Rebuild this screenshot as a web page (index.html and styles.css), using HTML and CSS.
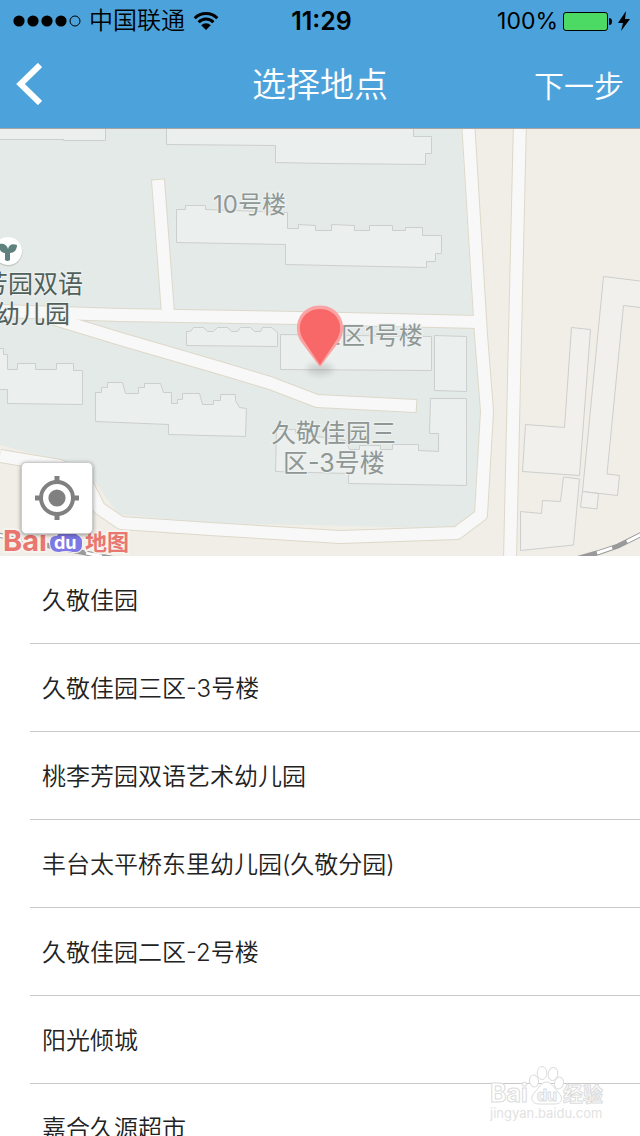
FILE: index.html
```html
<!DOCTYPE html>
<html lang="zh-CN">
<head>
<meta charset="utf-8">
<meta name="viewport" content="width=device-width, initial-scale=1">
<title>选择地点</title>
<link rel="stylesheet" href="styles.css">
</head>
<body>
<div class="screen">
  <header class="top">
    <div class="status">
      <div class="status-left">
        <svg class="signal" viewBox="0 0 68 12" width="68" height="12" aria-hidden="true">
          <circle cx="6" cy="6" r="5.6"/><circle cx="20" cy="6" r="5.6"/><circle cx="34" cy="6" r="5.6"/><circle cx="48" cy="6" r="5.6"/>
          <circle cx="62" cy="6" r="5" fill="none" stroke="#000" stroke-width="1"/>
        </svg>
        <span class="carrier">中国联通</span>
        <svg viewBox="0 0 26 20" width="26" height="20" aria-hidden="true">
          <path d="M1.7 7.2A16 16 0 0 1 24.3 7.2M5.6 11.2A10.4 10.4 0 0 1 20.4 11.2" fill="none" stroke="#000" stroke-width="3"/>
          <path d="M8.2 14.2A7 7 0 0 1 17.8 14.2L13 19Z"/>
        </svg>
      </div>
      <span class="clock">11:29</span>
      <div class="status-right">
        <span class="percent">100%</span>
        <svg viewBox="0 0 68 20" width="68" height="20" aria-hidden="true">
          <rect x="1.5" y="1.5" width="44" height="18" rx="2.5" fill="#4cd964" stroke="#000"/>
          <path d="M47 7q3 0 3 3.5t-3 3.5Z"/>
          <path d="M64 0L56 12h5l-2 8 9-12h-5Z"/>
        </svg>
      </div>
    </div>
    <nav class="nav">
      <button class="back" type="button" aria-label="返回">
        <svg viewBox="0 0 26 42" width="26" height="42" aria-hidden="true"><path d="M24 2L4.500 21L24 40" fill="none" stroke="#fff" stroke-width="6"/></svg>
      </button>
      <h1 class="title">选择地点</h1>
      <button class="next" type="button">下一步</button>
    </nav>
  </header>

  <section class="map" aria-label="地图">
    <svg class="map-canvas" viewBox="0 129 640 427" preserveAspectRatio="xMidYMid slice">
      <rect y="128" width="640" height="428" fill="#f1eee7"/>
      <path class="estate" d="M0 128H461L473 320L481 410L474 512L454 529L350 526L210 523L118 514L95 482L70 463L0 445Z"/>
      <g class="roads-casing">
        <path d="M0 456L60 466L85 480L99 508L121 523L210 529L340 537L457 533L481 515L487 411L481 335L468 120"/>
        <path d="M0 311L120 315L300 318L479 322"/>
        <path d="M45 316L124 340L210 365L270 383L317 401L417 406"/>
        <path d="M158 179L168 314"/>
        <path d="M520 120L515 335L510 560"/>
      </g>
      <g class="roads">
        <path d="M0 456L60 466L85 480L99 508L121 523L210 529L340 537L457 533L481 515L487 411L481 335L468 120"/>
        <path d="M0 311L120 315L300 318L479 322"/>
        <path d="M45 316L124 340L210 365L270 383L317 401L416 406"/>
        <path d="M158 180L168 314"/>
        <path d="M520 120L515 335L510 560"/>
      </g>
      <g class="buildings">
        <path d="M-2 120H105.500V140.500H63.500V139.500H-2Z"/>
        <path d="M166.500 120V144.500L275.500 145.500V162.500L326.500 163.500L425.500 164.500V153.500H431.500V136.500H413.500V120Z"/>
        <path d="M176.500 242.500V209.500H185.500V205.500H205.500V209.500L287.500 212.500V228.500H298.500V224.500L315.500 225.500V230.500H331.500V224.500L354.500 225.500V230.500H369.500V225.500H392.500V230.500H405.500V227.500H422.500V235.500H441.500V253.500H435.500V261.500H426.500V267.500L285.500 264.500V244.500Z"/>
        <path d="M186.500 345.500V331.500H190.500L193.500 327.500H203.500L207.500 331.500H213.500L217.500 327.500H227.500L231.500 331.500H237.500L240.500 327.500H250.500L254.500 331.500H260.500L262.500 327.500H271.500L277.500 332.500V346.500Z"/>
        <path d="M280.500 334.500L431.500 336.500V370.500L280.500 369.500Z"/>
        <path d="M434.500 335.500L466.500 336.500V391.500L434.500 390.500Z"/>
        <path d="M430.500 398.500H466.500V485.500L348.500 483.500V473.500L275.500 471.500L276.500 429.500H295.500V433.500L345.500 440.500L349.500 449.500H359.500V445.500H380.500V449.500H392.500V444.500H418.500V450.500L438.500 451.500V433.500H429.500Z"/>
        <path d="M-2 348.500H3.500V354.500H7.500V369.500H17.500V363.500H35.500V369.500H56.500V363.500H73.500V370.500H82.500V404.500L7.500 403.500V389.500H-2Z"/>
        <path d="M95.500 421.500V392.500H101.500V387.500H107.500V382.500H122.500L125.500 393.500H138.500V387.500H144.500V383.500H160.500L163.500 392.500H171.500V403.500H177.500V399.500H182.500V393.500H199.500L202.500 404.500H213.500V400.500H220.500V394.500H235.500V400.500L239.500 407.500L246.500 408.500L245.500 436.500L168.500 434.500V424.500Z"/>
      </g>
      <g class="buildings plain">
        <path d="M571.500 327.500L590.500 329.500L579.500 475.500L522.500 471.500L525.500 424.500L564.500 427.500Z"/>
        <path d="M603.500 276.500L644 281.500V308L623.500 305.500L607 474L619.500 475.500L617.500 495.500L582.500 491.500Z"/>
        <path d="M582.500 491.500L598.500 493.500L597 509L580.500 507Z"/>
        <path d="M563.500 477L579.500 479L573.500 545L520.500 550.500V511.500L541.500 513.500L542.500 500.500L560.500 501.500Z"/>
      </g>
      <g fill="none">
        <path d="M572 560L597 553L618 546L644 533M-2 535L50 546L116 559" stroke="#999" stroke-width="5"/>
        <path d="M572 560L597 553L618 546L644 533M-2 535L50 546L116 559" stroke="#fff" stroke-width="3" stroke-dasharray="16 16" stroke-dashoffset="6"/>
      </g>
      <circle cx="8" cy="252" r="14.500" fill="#c5cbc9"/>
      <circle cx="8" cy="251" r="14" fill="#fff"/>
      <path d="M-1 244C4 243 7 245 8 249C9 245 12 243 17 245C17 250 14 253 10 253V260Q7.500 262 5 260V253C1 253-1 250-1 244Z" fill="#5f817e"/>
      <g class="labels">
        <text x="213" y="213">10号楼</text>
        <text x="317" y="344">三区1号楼</text>
        <g class="labels-large">
          <text x="271" y="442">久敬佳园三</text>
          <text x="283" y="472">区-3号楼</text>
        </g>
        <g class="labels-poi">
          <text x="-17" y="293">芳园双语</text>
          <text x="-5" y="323">幼儿园</text>
        </g>
      </g>
      <ellipse class="pin-shadow" cx="320" cy="369" rx="13" ry="6"/>
      <path d="M320 367L300.500 341C291 325 301 305.500 320 305.500S349 325 339.500 341Z" fill="#faa3a2"/>
      <path d="M320 365L303.500 340C294 325 304 309 320 309S346 325 336.500 340Z" fill="#f96868"/>
      <g class="brand">
        <g class="brand-halo">
          <text x="3" y="551" class="brand-latin">Bai</text>
          <text x="85" y="550" class="brand-han">地图</text>
        </g>
        <path d="M50 543Q50 535 57 536Q59 531 66 531Q74 530 77 535Q83 537 82 545Q82 553 73 552Q66 550 59 552Q50 552 50 543Z" fill="#7d78e5" stroke="#f5f3ef" stroke-width="2" paint-order="stroke"/>
        <text x="54" y="549" class="brand-du">du</text>
      </g>
    </svg>
    <button class="locate" type="button" aria-label="定位">
      <svg viewBox="0 0 44 44" width="44" height="44" aria-hidden="true">
        <circle cx="22" cy="22" r="16" fill="none" stroke="#808080" stroke-width="4"/>
        <circle cx="22" cy="22" r="8.600" fill="#808080"/>
        <path d="M22 0V6M22 38V44M0 22H6M38 22H44" stroke="#808080" stroke-width="5"/>
      </svg>
    </button>
  </section>

  <ul class="places">
    <li><button type="button">久敬佳园</button></li>
    <li><button type="button">久敬佳园三区-3号楼</button></li>
    <li><button type="button">桃李芳园双语艺术幼儿园</button></li>
    <li><button type="button">丰台太平桥东里幼儿园(久敬分园)</button></li>
    <li><button type="button">久敬佳园二区-2号楼</button></li>
    <li><button type="button">阳光倾城</button></li>
    <li><button type="button">嘉合久源超市</button></li>
  </ul>

  <svg class="watermark" viewBox="0 0 120 60" width="120" height="60">
    <g fill="#fff" stroke="#dcdcdc">
      <ellipse cx="44" cy="17" rx="4.500" ry="6" transform="rotate(-12 44 17)"/>
      <ellipse cx="52" cy="9" rx="4.800" ry="6.500"/>
      <ellipse cx="63" cy="10" rx="4.800" ry="6.500" transform="rotate(10 63 10)"/>
      <ellipse cx="69" cy="19" rx="4.500" ry="6" transform="rotate(14 69 19)"/>
      <path d="M56 18C51 18 49 24 45 28C39 34 42 40 49 40H65C72 40 74 34 68 28C64 24 62 18 56 18Z"/>
      <text x="0" y="38" class="mark-latin">Bai</text>
      <text x="47" y="37" class="mark-du">du</text>
      <text x="73" y="38" class="mark-han">经验</text>
      <text x="0" y="54" class="mark-url">jingyan.baidu.com</text>
    </g>
  </svg>
</div>
</body>
</html>
```
FILE: styles.css
```css
* {
  box-sizing: border-box;
}

body {
  margin: 0;
  background: #fff;
  color: #222;
  font-family: Inter, "Noto Sans CJK SC", sans-serif;
  font-size: 24px;
}

button {
  margin: 0;
  padding: 0;
  border: 0;
  background: none;
  color: inherit;
  font: inherit;
  cursor: pointer;
}

svg {
  display: block;
}

.screen {
  position: relative;
  display: flex;
  flex-direction: column;
  height: 100vh;
  overflow: hidden;
}

.top {
  flex: none;
  background: #4ca3db;
}

.status {
  display: grid;
  grid-template-columns: 1fr auto 1fr;
  align-items: center;
  height: 40px;
  padding: 0 10px 0 13px;
  color: #000;
  line-height: 40px;
}

.status-left,
.status-right {
  display: flex;
  align-items: center;
}

.status > * {
  padding-top: 1px;
}

.status-left {
  gap: 8px;
}

.status-right {
  justify-content: flex-end;
  gap: 4px;
}

.carrier {
  font-weight: 350;
}

.percent {
  font-size: 23px;
}

.clock {
  font-size: 25px;
  font-weight: 600;
}

.nav {
  display: grid;
  grid-template-columns: 1fr auto 1fr;
  align-items: center;
  height: 88px;
  padding: 0 16px;
  color: #fff;
}

.back {
  justify-self: start;
}

.title {
  margin: 0;
  padding-top: 2px;
  font-size: 34px;
  font-weight: 350;
  line-height: 48px;
}

.next {
  justify-self: end;
  font-size: 30px;
  font-weight: 350;
}

.map {
  position: relative;
  flex: none;
  height: 428px;
  border-top: 1px solid #a5a5a5;
}

.map-canvas {
  width: 100%;
  height: 100%;
}

.estate {
  fill: #e4eae8;
}

.roads-casing,
.roads {
  fill: none;
  stroke-linejoin: round;
}

.roads-casing {
  stroke: #ddd8c9;
  stroke-width: 14px;
}

.roads {
  stroke: #f8f8f8;
  stroke-width: 12px;
}

.buildings {
  fill: #ebefee;
  stroke: #cdcfce;
}

.plain {
  fill: #f1f0ec;
}

.labels {
  fill: #8e9794;
  stroke: #eef2f1;
  stroke-width: 2px;
  paint-order: stroke;
  font-size: 24px;
}

.labels-large {
  font-size: 25px;
}

.labels-poi {
  fill: #50605b;
  font-size: 25px;
}

.pin-shadow {
  fill: #000;
  opacity: 0.12;
  filter: blur(3px);
}

.brand-halo {
  fill: #ea7670;
  stroke: #f5f3ef;
  stroke-width: 4px;
  paint-order: stroke;
}

.brand-latin {
  font-size: 29px;
  font-weight: 700;
}

.brand-han {
  font-size: 22px;
  font-weight: 700;
}

.brand-du {
  fill: #fff;
  font-size: 18px;
  font-weight: 700;
}

.locate {
  position: absolute;
  bottom: 22px;
  left: 21px;
  display: grid;
  place-items: center;
  width: 72px;
  height: 72px;
  border: 1px solid #ccc;
  border-radius: 5px;
  background: #fff;
  box-shadow: 0 1px 4px rgba(0, 0, 0, 0.4);
}

.places {
  flex: 1;
  min-height: 0;
  margin: 0;
  padding: 0 0 0 30px;
  overflow: hidden;
  list-style: none;
}

.places li {
  height: 88px;
  border-bottom: 1px solid #c8c8c8;
}

.places button {
  width: 100%;
  height: 100%;
  padding: 0 12px 2px;
  font-weight: 350;
  text-align: left;
}

.watermark {
  position: absolute;
  right: 30px;
  bottom: 12px;
  pointer-events: none;
}

.mark-latin {
  font-size: 25px;
  font-weight: 700;
}

.mark-du {
  font-size: 16px;
  font-weight: 700;
}

.mark-han {
  font-size: 20px;
  font-weight: 700;
}

.mark-url {
  fill: #e2e2e2;
  stroke: none;
  font-size: 13px;
}
```
